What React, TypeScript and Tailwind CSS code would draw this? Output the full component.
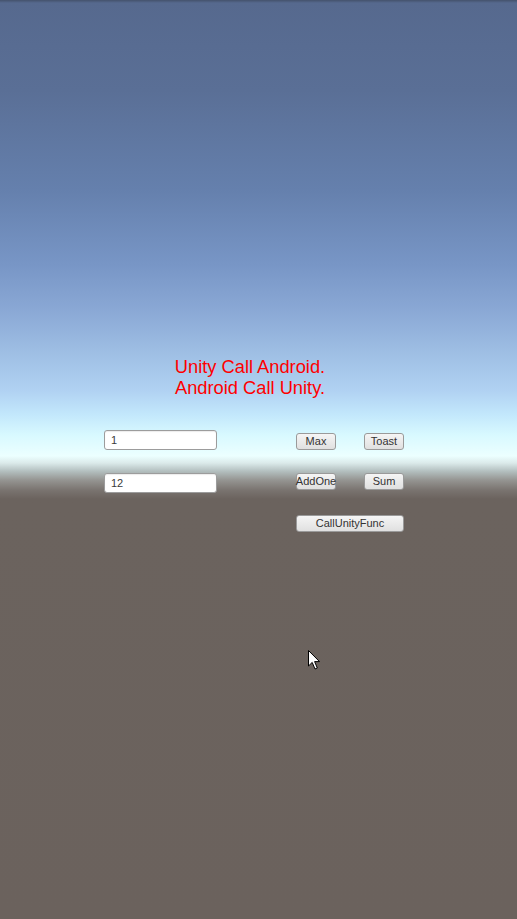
const font = { fontFamily: '"Liberation Sans", Arial, sans-serif' };

function Field({ value }: { value: string }) {
  return (
    <div className="flex h-[20px] w-[113px] items-center rounded-[3px] border border-[#9c9c9c] bg-white pl-[6px] text-[11px] text-[#3a3a3a] shadow-[inset_0_1px_1px_rgba(0,0,0,0.08)]">
      {value}
    </div>
  );
}

function Btn({ label, wide }: { label: string; wide?: boolean }) {
  return (
    <button
      className={
        "flex h-[17px] items-center justify-center whitespace-nowrap rounded-[3px] border border-[#9a9a9a] bg-[linear-gradient(to_bottom,#f5f5f5,#e0e0e0)] text-[11px] leading-none text-[#333333] " +
        (wide ? "w-[108px]" : "w-[40px]")
      }
    >
      {label}
    </button>
  );
}

function Cursor() {
  return (
    <svg
      className="absolute left-[308px] top-[650px]"
      width="13"
      height="21"
      viewBox="0 0 13 21"
    >
      <path
        d="M0.5 0.5 L0.5 16 L4.2 12.4 L7 19 L9.3 18 L6.6 11.6 L11.5 11.6 Z"
        fill="#ffffff"
        stroke="#000000"
        strokeWidth="1"
        strokeLinejoin="miter"
      />
    </svg>
  );
}

export default function App() {
  return (
    <div
      className="relative h-[919px] w-full overflow-hidden bg-[linear-gradient(to_bottom,#44526c_0px,#56698e_3px,#5a6f96_90px,#6580ad_190px,#7896c6_265px,#8aa8d5_310px,#9dbde3_350px,#b0d1f2_390px,#c3e8fc_415px,#d8f9ff_435px,#ecffff_456px,#dbeaea_463px,#b4c0c0_471px,#959592_480px,#7a7470_490px,#6b635e_499px,#6b625d_919px)]"
      style={font}
    >
      <div className="pt-[357px]">
        <div className="ml-[170px] w-[160px] text-center text-[18.3px] leading-[20.5px] text-[#ff0000]">
          <div>Unity Call Android.</div>
          <div>Android Call Unity.</div>
        </div>

        <div className="mt-[32px] flex pl-[104px]">
          <div className="flex flex-col gap-[23px]">
            <Field value="1" />
            <Field value="12" />
          </div>

          <div className="ml-[79px] flex flex-col pt-[3px]">
            <div className="flex gap-[28px]">
              <Btn label="Max" />
              <Btn label="Toast" />
            </div>
            <div className="mt-[23px] flex gap-[28px]">
              <Btn label="AddOne" />
              <Btn label="Sum" />
            </div>
            <div className="mt-[25px]">
              <Btn label="CallUnityFunc" wide />
            </div>
          </div>
        </div>
      </div>

      <Cursor />
    </div>
  );
}
